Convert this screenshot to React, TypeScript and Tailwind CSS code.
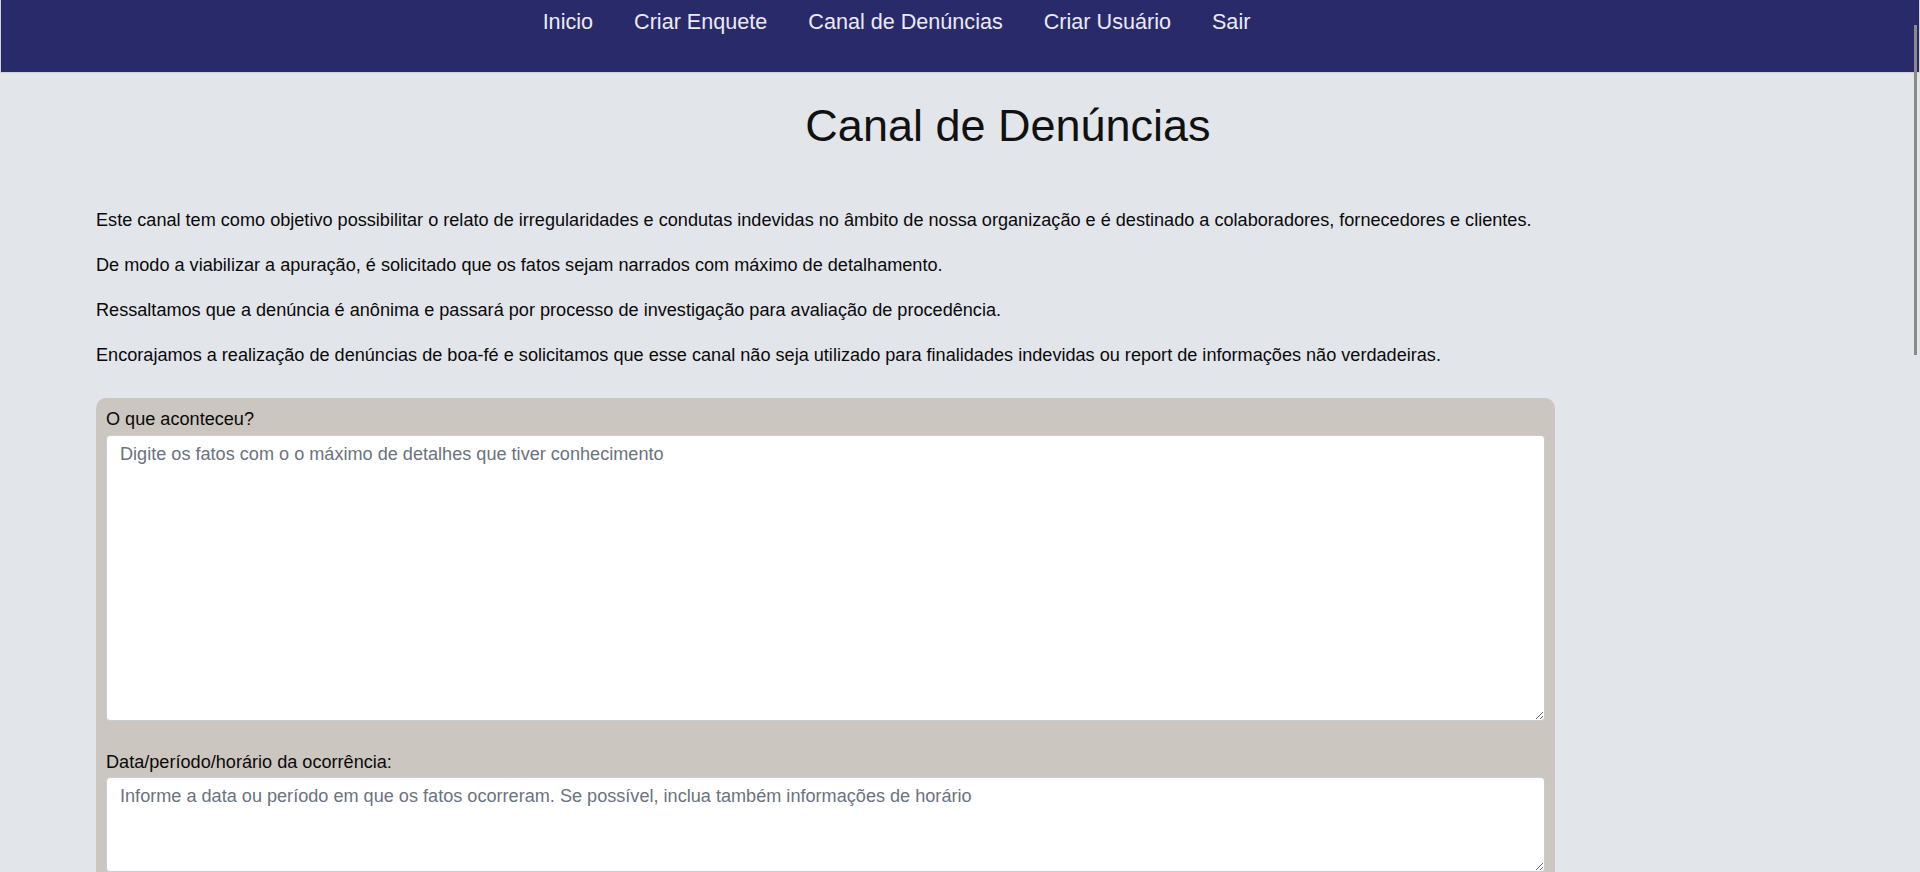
import * as React from 'react';

const links = ['Inicio', 'Criar Enquete', 'Canal de Denúncias', 'Criar Usuário', 'Sair'];

const paragraphs = [
  'Este canal tem como objetivo possibilitar o relato de irregularidades e condutas indevidas no âmbito de nossa organização e é destinado a colaboradores, fornecedores e clientes.',
  'De modo a viabilizar a apuração, é solicitado que os fatos sejam narrados com máximo de detalhamento.',
  'Ressaltamos que a denúncia é anônima e passará por processo de investigação para avaliação de procedência.',
  'Encorajamos a realização de denúncias de boa-fé e solicitamos que esse canal não seja utilizado para finalidades indevidas ou report de informações não verdadeiras.',
];

export default function App() {
  return (
    <div className="relative h-screen overflow-hidden bg-[#e2e5ea] font-['Liberation_Sans',Arial,sans-serif] text-[18px] leading-[1.5] text-[#111]">
      {/* Top navigation */}
      <nav className="h-[73px] bg-[#292a6a] border-l border-r border-b border-[#d3cfd4]">
        <ul className="flex justify-center gap-[41px] pr-[127px] pt-[6px]">
          {links.map((l) => (
            <li key={l}>
              <a href="#" className="text-[21.6px] leading-[1.5] text-[#eceaf4]">
                {l}
              </a>
            </li>
          ))}
        </ul>
      </nav>

      <main className="ml-[5%]">
        <h1 className="mt-[19px] text-center text-[45px] leading-[1.5] text-[#111]">Canal de Denúncias</h1>

        <div className="mt-[47px] flex flex-col gap-[18px]">
          {paragraphs.map((p) => (
            <p key={p} className="text-[18.13px] leading-[27px] text-[#0a0a0a]">
              {p}
            </p>
          ))}
        </div>

        {/* Report form */}
        <form className="mt-[29px] w-[80%] rounded-[10px] bg-[#cbc6c0] px-[10px] pt-[8px] pb-[12px]">
          <label className="block text-[18.13px] leading-[27px] text-[#0a0a0a]">O que aconteceu?</label>
          <textarea
            className="mt-[2px] block h-[286px] w-full rounded-[4px] border border-[#c9ccd3] bg-white px-[13px] py-[5px] text-[18.13px] leading-[27px] placeholder:text-[#6b7280]"
            placeholder="Digite os fatos com o o máximo de detalhes que tiver conhecimento"
          />

          <label className="mt-[28px] block text-[18.13px] leading-[27px] text-[#0a0a0a]">Data/período/horário da ocorrência:</label>
          <textarea
            className="mt-[1px] block h-[95px] w-full rounded-[4px] border border-[#c9ccd3] bg-white px-[13px] py-[5px] text-[18.13px] leading-[27px] placeholder:text-[#6b7280]"
            placeholder="Informe a data ou período em que os fatos ocorreram. Se possível, inclua também informações de horário"
          />
        </form>
      </main>

      {/* thin overlay scrollbar thumb */}
      <div className="absolute right-[3px] top-[25px] h-[330px] w-[3px] bg-[#8a8a8a]" />
    </div>
  );
}
